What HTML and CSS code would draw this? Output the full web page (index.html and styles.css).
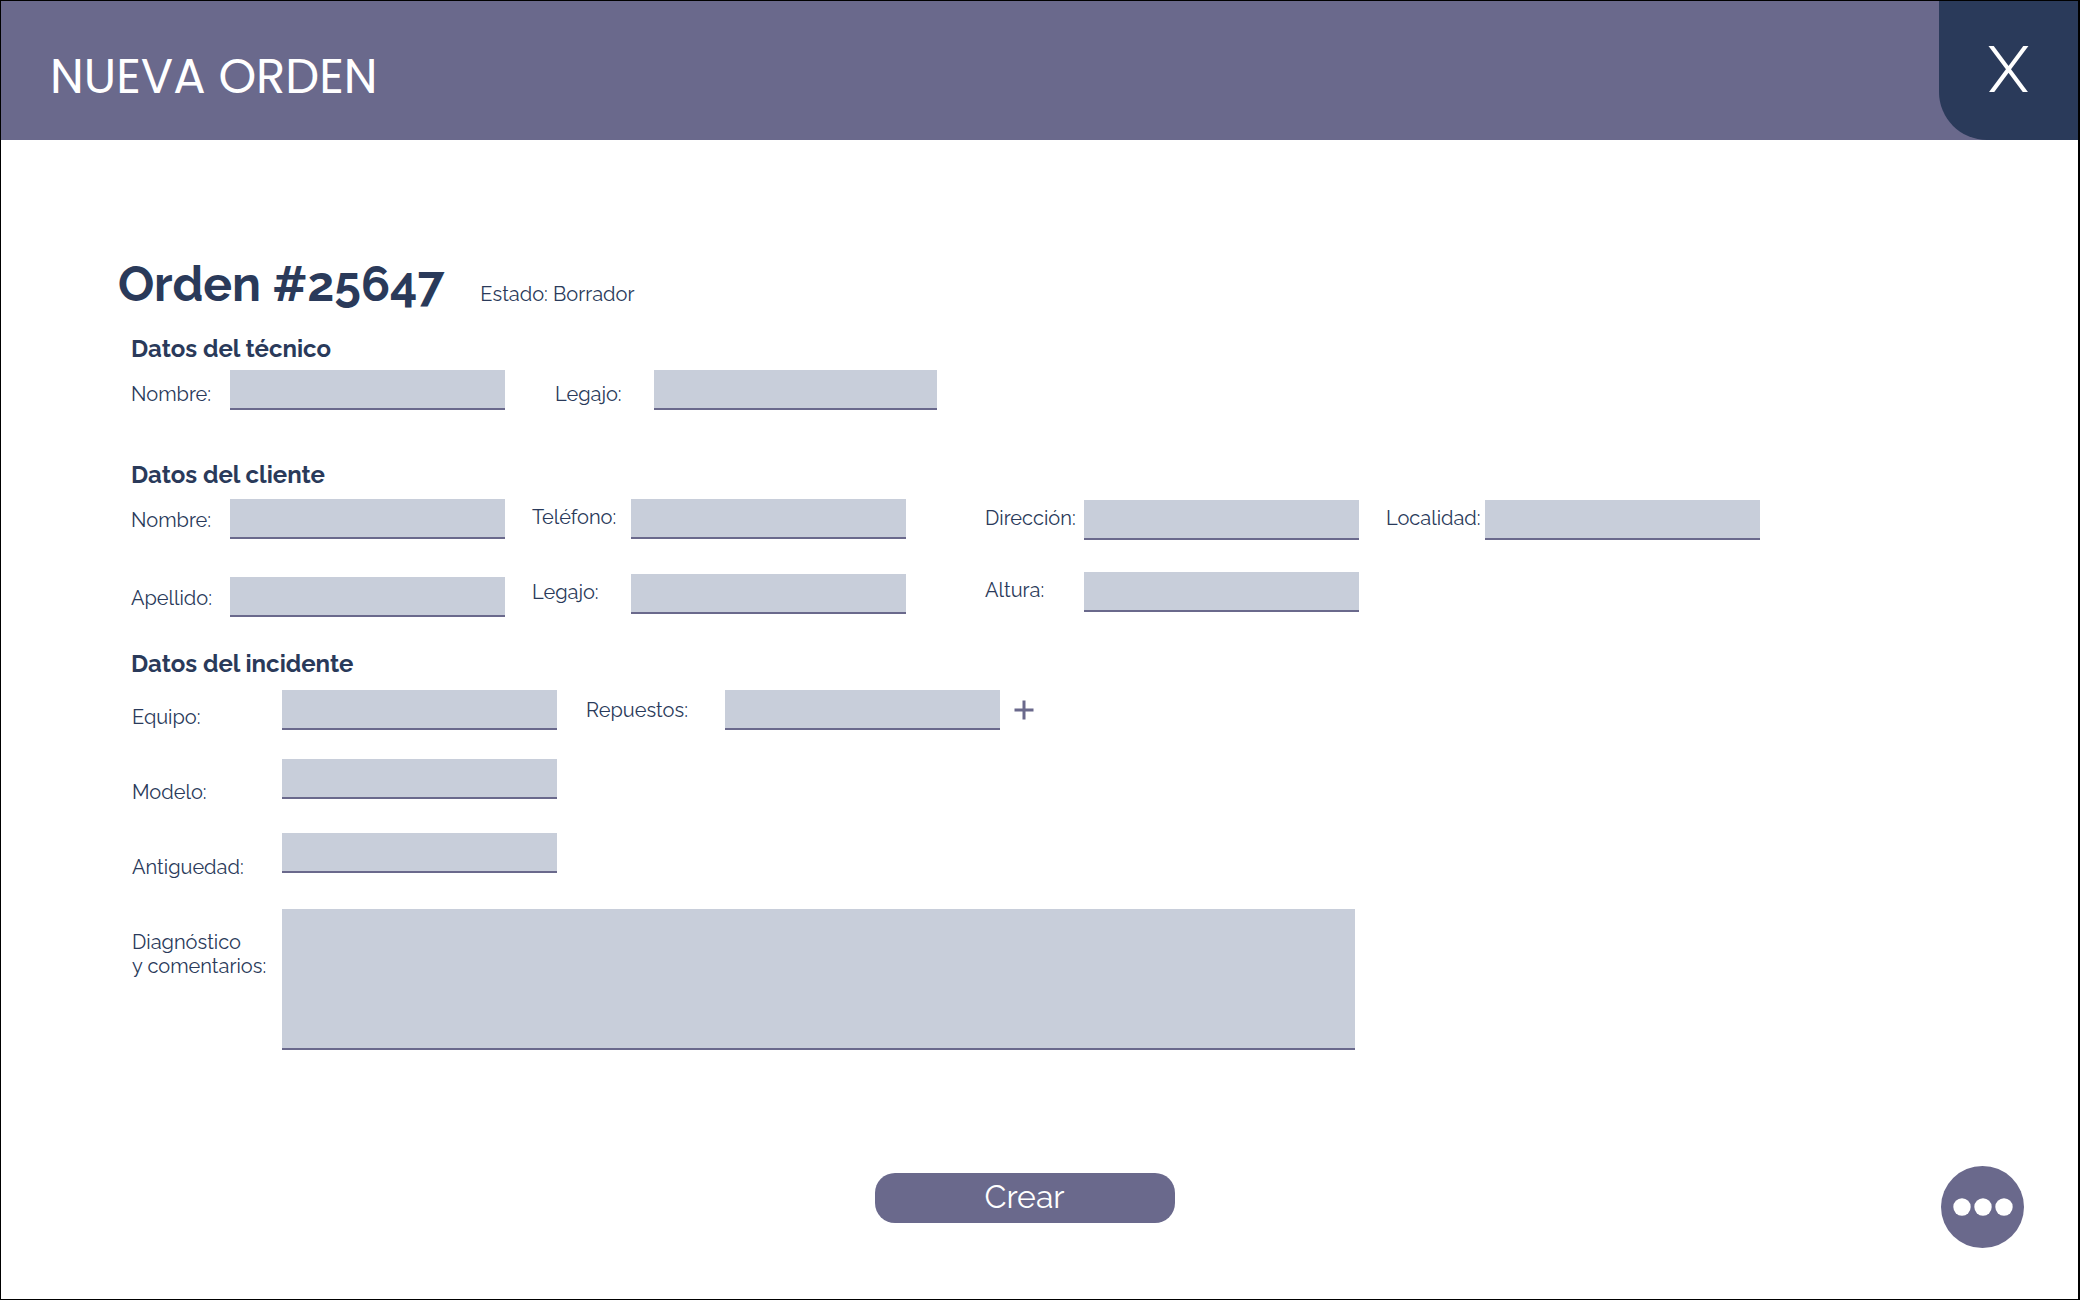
FILE: index.html
```html
<!DOCTYPE html>
<html lang="es">
<head>
  <meta charset="utf-8">
  <meta name="viewport" content="width=device-width, initial-scale=1">
  <title>Nueva orden</title>
  <link rel="stylesheet" href="styles.css">
</head>
<body>
  <header class="topbar">
    <h1 class="topbar-title">NUEVA ORDEN</h1>
    <button class="close" type="button" aria-label="Cerrar">X</button>
  </header>

  <main class="content">
    <div class="order-head">
      <h2 class="order-number">Orden #25647</h2>
      <p class="order-state">Estado: Borrador</p>
    </div>

    <form class="order-form">
      <section class="section technician">
        <h3 class="section-title">Datos del técnico</h3>
        <div class="groups">
          <div class="group">
            <label for="tec-nombre">Nombre:</label>
            <input class="field" id="tec-nombre" type="text">
          </div>
          <div class="group group-wide">
            <label for="tec-legajo">Legajo:</label>
            <input class="field" id="tec-legajo" type="text">
          </div>
        </div>
      </section>

      <section class="section client">
        <h3 class="section-title">Datos del cliente</h3>
        <div class="groups">
          <div class="group group-name">
            <label for="cli-nombre">Nombre:</label>
            <input class="field" id="cli-nombre" type="text">
            <label for="cli-apellido">Apellido:</label>
            <input class="field" id="cli-apellido" type="text">
          </div>
          <div class="group group-contact">
            <label for="cli-telefono">Teléfono:</label>
            <input class="field" id="cli-telefono" type="tel">
            <label for="cli-legajo">Legajo:</label>
            <input class="field" id="cli-legajo" type="text">
          </div>
          <div class="group group-address">
            <label for="cli-direccion">Dirección:</label>
            <input class="field" id="cli-direccion" type="text">
            <label for="cli-altura">Altura:</label>
            <input class="field" id="cli-altura" type="text">
          </div>
          <div class="group group-city">
            <label for="cli-localidad">Localidad:</label>
            <input class="field" id="cli-localidad" type="text">
          </div>
        </div>
      </section>

      <section class="section incident">
        <h3 class="section-title">Datos del incidente</h3>
        <div class="incident-body">
          <div class="incident-labels">
            <label for="inc-equipo">Equipo:</label>
            <label for="inc-modelo">Modelo:</label>
            <label for="inc-antiguedad">Antiguedad:</label>
            <label for="inc-diagnostico">Diagnóstico<br>y comentarios:</label>
          </div>
          <div class="incident-fields">
            <div class="equipment">
              <input class="field" id="inc-equipo" type="text">
              <div class="parts">
                <label for="inc-repuestos">Repuestos:</label>
                <input class="field" id="inc-repuestos" type="text">
                <button class="add" type="button" aria-label="Agregar repuesto">
                  <svg width="20" height="20" viewBox="0 0 20 20" aria-hidden="true">
                    <path d="M10 0.500v19M0.500 10h19" fill="none" stroke="currentColor" stroke-width="3"/>
                  </svg>
                </button>
              </div>
            </div>
            <input class="field" id="inc-modelo" type="text">
            <input class="field" id="inc-antiguedad" type="text">
            <textarea class="field notes" id="inc-diagnostico"></textarea>
          </div>
        </div>
      </section>

      <button class="submit" type="submit">Crear</button>
    </form>
  </main>

  <button class="more" type="button" aria-label="Más opciones">
    <svg width="60" height="18" viewBox="0 0 60 18" fill="currentColor" aria-hidden="true">
      <circle cx="9" cy="9" r="8.700"/>
      <circle cx="30" cy="9" r="8.700"/>
      <circle cx="51" cy="9" r="8.700"/>
    </svg>
  </button>
</body>
</html>
```
FILE: styles.css
```css
:root {
  --navy: #2a3a5a;
  --purple: #6a698c;
  --field: #c8ceda;
}

* {
  box-sizing: border-box;
}

body {
  position: relative;
  min-height: 100vh;
  margin: 0;
  border: 1px solid #000;
  border-right-width: 2px;
  background: #fff;
  color: var(--navy);
  font-family: Raleway, Lato, "Open Sans", sans-serif;
  font-size: 20px;
  font-weight: 400;
  line-height: 24px;
}

h1,
h2,
h3,
p {
  margin: 0;
}

button {
  padding: 0;
  border: 0;
  font-family: inherit;
  font-weight: 400;
  cursor: pointer;
}

/* Top bar */

.topbar {
  display: flex;
  align-items: stretch;
  justify-content: space-between;
  height: 139px;
  padding-left: 49px;
  background: var(--purple);
  color: #fff;
}

.topbar-title {
  align-self: center;
  padding-top: 12px;
  font-family: Poppins, Raleway, Lato, sans-serif;
  font-size: 48px;
  font-weight: 400;
  line-height: 56px;
}

.close {
  width: 139px;
  padding-bottom: 3px;
  border-bottom-left-radius: 48px;
  background: var(--navy);
  color: #fff;
  font-size: 64px;
}

/* Order */

.content {
  padding: 116px 160px 76px 130px;
}

.order-head {
  display: flex;
  flex-wrap: wrap;
  align-items: baseline;
  gap: 0 36px;
  margin-left: -13px;
}

.order-number {
  font-size: 48px;
  font-weight: 700;
  line-height: 56px;
}

.order-form {
  display: flex;
  flex-direction: column;
}

.section-title {
  font-size: 24px;
  font-weight: 700;
  line-height: 28px;
}

.technician {
  margin-top: 23px;
}

.client {
  margin-top: 51px;
}

.incident {
  margin-top: 33px;
}

.field {
  display: block;
  width: 275px;
  height: 40px;
  padding: 4px 8px;
  border: 0;
  border-bottom: 2px solid var(--purple);
  border-radius: 0;
  outline: 0;
  background: var(--field);
  color: var(--navy);
  font: inherit;
}

/* Label and field pairs */

.groups {
  display: flex;
  flex-wrap: wrap;
  align-items: flex-start;
}

.group {
  display: grid;
  grid-template-columns: 99px auto;
  align-items: start;
}

.technician .groups {
  gap: 24px 50px;
  margin-top: 7px;
}

.technician label {
  padding-top: 12px;
}

.group-wide .field {
  width: 283px;
}

.client .groups {
  column-gap: 27px;
  margin-top: 10px;
}

.client label {
  padding-top: 6px;
}

.client .group-name label {
  padding-top: 9px;
}

.group-name {
  row-gap: 38px;
}

.group-contact {
  row-gap: 35px;
}

.group-address {
  row-gap: 32px;
  margin-left: 52px;
}

.group-address,
.group-city {
  margin-top: 1px;
}

/* Incident */

.incident-body {
  display: flex;
  margin-top: 12px;
}

.incident-labels {
  display: grid;
  grid-template-rows: 75px 75px 75px auto;
  align-content: start;
  width: 151px;
  padding: 15px 0 0 1px;
}

.incident-fields {
  display: grid;
  flex: 0 1 1073px;
  grid-template-rows: 69px 74px 76px auto;
  align-items: start;
}

.equipment,
.parts {
  display: flex;
}

.parts {
  align-items: center;
  margin-left: 29px;
}

.parts label {
  width: 139px;
}

.add {
  display: flex;
  margin-left: 14px;
  background: none;
  color: var(--purple);
}

.notes {
  width: 100%;
  height: 141px;
  resize: none;
}

/* Actions */

.submit {
  align-self: center;
  width: 300px;
  height: 50px;
  margin-top: 123px;
  padding-bottom: 4px;
  border-radius: 20px;
  background: var(--purple);
  color: #fff;
  font-size: 32px;
}

.more {
  position: absolute;
  right: 54px;
  bottom: 51px;
  display: flex;
  align-items: center;
  justify-content: center;
  width: 83px;
  height: 82px;
  border-radius: 50%;
  background: var(--purple);
  color: #fff;
}
```
